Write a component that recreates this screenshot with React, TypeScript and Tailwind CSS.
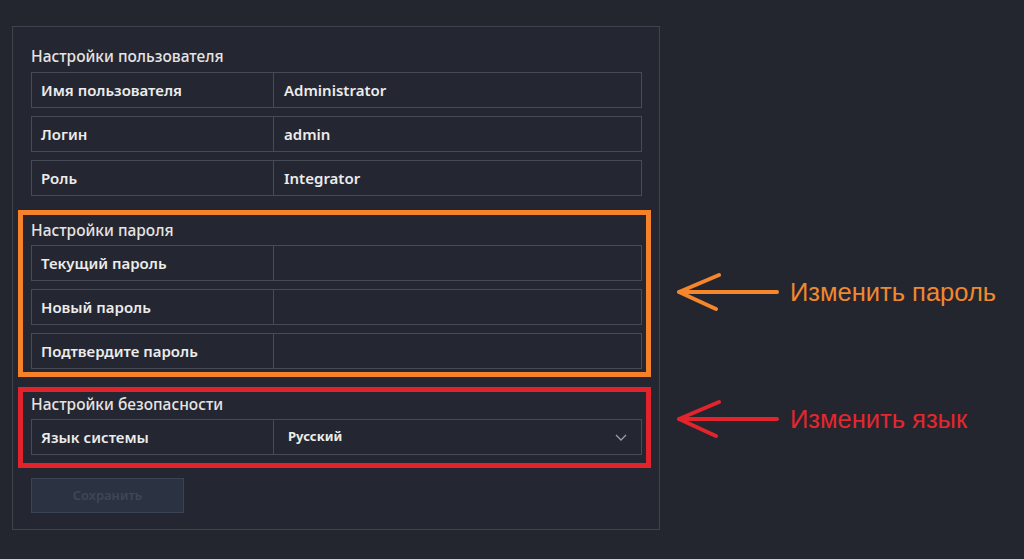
import React from 'react';

type Field = {label: string; value?: string};

const userFields: Field[] = [
    {label: 'Имя пользователя', value: 'Administrator'},
    {label: 'Логин', value: 'admin'},
    {label: 'Роль', value: 'Integrator'},
];

const passwordFields: Field[] = [
    {label: 'Текущий пароль'},
    {label: 'Новый пароль'},
    {label: 'Подтвердите пароль'},
];

const font = {fontFamily: '"Noto Sans", "Open Sans", sans-serif'};

function Row({label, value}: Field) {
    return (
        <div className="flex h-[36px] border border-[#474b56]">
            <div className="flex w-[242px] items-center border-r border-[#474b56] pl-[9px] text-[15px] font-semibold text-[#ececec]">
                {label}
            </div>
            <div className="flex flex-1 items-center pl-[10px] text-[15px] font-semibold text-[#ececec]">
                {value}
            </div>
        </div>
    );
}

function SectionTitle({children}: {children: React.ReactNode}) {
    return (
        <div className="h-[20px] text-[15.5px] font-medium leading-[20px] text-[#e4e4e4]">
            {children}
        </div>
    );
}

function Arrow({color}: {color: string}) {
    return (
        <svg width="104" height="40" viewBox="0 0 104 40" fill="none">
            <path
                d="M3 20 H101 M3 20 L43 3 M3 20 L40 37"
                stroke={color}
                strokeWidth="4"
                strokeLinecap="round"
                strokeLinejoin="round"
            />
        </svg>
    );
}

export default function App() {
    return (
        <div className="min-h-screen w-full bg-[#23262f]" style={font}>
            <div className="flex items-start">
                {/* Settings panel */}
                <div className="ml-[12px] mt-[26px] w-[648px] border border-[#3e424d] bg-[#242731] px-[18px] pr-[17px] pb-[16px] pt-[19px]">
                    <SectionTitle>Настройки пользователя</SectionTitle>
                    <div className="mt-[6px] flex flex-col gap-[8px]">
                        {userFields.map((f) => (
                            <Row key={f.label} {...f}/>
                        ))}
                    </div>

                    {/* Password section */}
                    <div className="-ml-[13px] -mr-[9px] mt-[14px] border-[5px] border-[#f5822a] pb-[3px] pl-[8px] pr-[4px] pt-[5px]">
                        <SectionTitle>Настройки пароля</SectionTitle>
                        <div className="mt-[5px] flex flex-col gap-[8px]">
                            {passwordFields.map((f) => (
                                <Row key={f.label} {...f}/>
                            ))}
                        </div>
                    </div>

                    {/* Security section */}
                    <div className="-ml-[13px] -mr-[9px] mt-[10px] border-[5px] border-[#e3232b] pb-[8px] pl-[8px] pr-[4px] pt-[2px]">
                        <SectionTitle>Настройки безопасности</SectionTitle>
                        <div className="mt-[5px] flex h-[36px] border border-[#474b56]">
                            <div className="flex w-[242px] items-center border-r border-[#474b56] pl-[9px] text-[15px] font-semibold text-[#ececec]">
                                Язык системы
                            </div>
                            <div className="flex flex-1 items-center justify-between pl-[14px] pr-[14px] text-[13px] font-bold text-[#ececec]">
                                <span>Русский</span>
                                <svg width="12" height="7" viewBox="0 0 12 7" fill="none">
                                    <path d="M1 1 L6 6 L11 1" stroke="#9a9ea8" strokeWidth="1.3"/>
                                </svg>
                            </div>
                        </div>
                    </div>

                    <button
                        className="mt-[10px] flex h-[35px] w-[153px] items-center justify-center border border-[#3a4456] bg-[#2b3343] text-[13px] font-semibold text-[#3d4759]"
                        disabled
                    >
                        Сохранить
                    </button>
                </div>

                {/* Hints */}
                <div className="ml-[16px] mt-[272px] flex flex-col gap-[87px]">
                    <div className="flex h-[40px] items-center">
                        <Arrow color="#f5862c"/>
                        <span
                            className="ml-[10px] text-[25.5px] text-[#f0882e]"
                            style={{fontFamily: '"Liberation Sans", Arial, sans-serif'}}
                        >
                            Изменить пароль
                        </span>
                    </div>
                    <div className="flex h-[40px] items-center">
                        <Arrow color="#e4242c"/>
                        <span
                            className="ml-[10px] text-[25.5px] text-[#e4262e]"
                            style={{fontFamily: '"Liberation Sans", Arial, sans-serif'}}
                        >
                            Изменить язык
                        </span>
                    </div>
                </div>
            </div>
        </div>
    );
}
